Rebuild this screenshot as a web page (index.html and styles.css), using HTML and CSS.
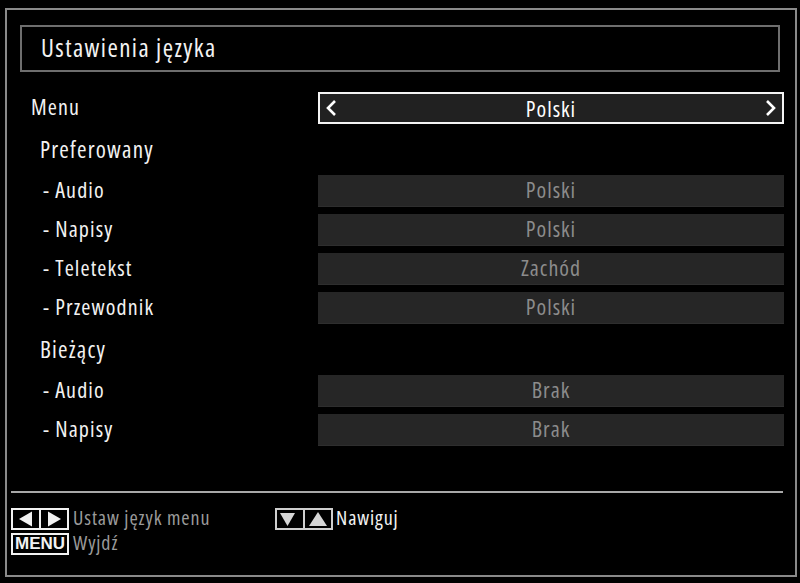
FILE: index.html
```html
<!DOCTYPE html>
<html lang="pl">

<head>
  <meta charset="UTF-8">
  <meta name="viewport" content="width=device-width, initial-scale=1.0">
  <title>Ustawienia języka</title>
  <link rel="stylesheet" href="styles.css">
</head>

<body>
  <div class="screen">
    <!-- naglowek -->
    <div class="title">Ustawienia języka</div>

    <!-- lista ustawien -->
    <div class="list">
      <div class="row">
        <span class="label">Menu</span>
        <div class="value selected">
          <svg class="chev" width="12" height="18" viewBox="0 0 12 18"><polyline points="10,2 3,9 10,16" /></svg>
          <span>Polski</span>
          <svg class="chev" width="12" height="18" viewBox="0 0 12 18"><polyline points="2,2 9,9 2,16" /></svg>
        </div>
      </div>

      <div class="heading">Preferowany</div>
      <div class="row">
        <span class="label sub">- Audio</span>
        <div class="value">Polski</div>
      </div>
      <div class="row">
        <span class="label sub">- Napisy</span>
        <div class="value">Polski</div>
      </div>
      <div class="row">
        <span class="label sub">- Teletekst</span>
        <div class="value">Zachód</div>
      </div>
      <div class="row">
        <span class="label sub">- Przewodnik</span>
        <div class="value">Polski</div>
      </div>

      <div class="heading">Bieżący</div>
      <div class="row">
        <span class="label sub">- Audio</span>
        <div class="value">Brak</div>
      </div>
      <div class="row">
        <span class="label sub">- Napisy</span>
        <div class="value">Brak</div>
      </div>
    </div>

    <!-- pomoc klawiszy -->
    <div class="footer">
      <div class="hint">
        <div class="keys">
          <svg width="26" height="18" viewBox="0 0 26 18"><polygon points="19,1.5 19,16.5 6,9" /></svg>
          <svg width="26" height="18" viewBox="0 0 26 18"><polygon points="7,1.5 7,16.5 20,9" /></svg>
        </div>
        <span class="hint-text">Ustaw język menu</span>
      </div>
      <div class="hint">
        <div class="keys light">
          <svg width="26" height="18" viewBox="0 0 26 18"><polygon points="3,3 18,3 10.5,16" /></svg>
          <svg width="26" height="18" viewBox="0 0 26 18"><polygon points="4,16 22,16 13,2" /></svg>
        </div>
        <span class="hint-text white">Nawiguj</span>
      </div>
      <div class="hint">
        <div class="menu-key">MENU</div>
        <span class="hint-text">Wyjdź</span>
      </div>
    </div>
  </div>
</body>

</html>
```

FILE: styles.css
```css
body {
  margin: 0;
  padding: 0;
  background-color: #000;
  font-family: "Open Sans", "DejaVu Sans Condensed", sans-serif;
  font-stretch: 75%;
  color: #f2f2f2;
}

.screen {
  display: flex;
  flex-direction: column;
  height: 569px;
  margin: 8px 3px 0 5px;
  border: 2px solid #8a8a8a;
  box-sizing: border-box;
}

.title {
  width: 760px;
  height: 47px;
  margin: 15px 0 0 13px;
  padding-left: 19px;
  border: 2px solid #6e6e6e;
  box-sizing: border-box;
  font-size: 25px;
  letter-spacing: 1.4px;
  line-height: 41px;
}

.list {
  margin-top: 20px;
  padding-left: 24px;
}

.row {
  display: flex;
  align-items: center;
  height: 32px;
  margin-bottom: 7px;
}

.label {
  flex: none;
  width: 287px;
  padding-bottom: 4px;
  box-sizing: border-box;
  font-size: 22px;
  letter-spacing: 1.1px;
}

.label.sub {
  padding-left: 12px;
}

.heading {
  height: 43px;
  padding-left: 9px;
  font-size: 23px;
  letter-spacing: 1.2px;
  line-height: 41px;
  box-sizing: border-box;
}

.row + .heading {
  height: 44px;
  line-height: 37px;
}

.value {
  display: flex;
  flex: none;
  align-items: center;
  justify-content: center;
  width: 466px;
  height: 32px;
  padding-bottom: 3px;
  background-color: #262626;
  border-bottom: 1px solid #2e2e2e;
  box-sizing: border-box;
  color: #8c8c8c;
  font-size: 22px;
  letter-spacing: 1px;
}

.value.selected {
  justify-content: space-between;
  padding: 0 5px 1px;
  border: 2px solid #f4f4f4;
  background-color: #212121;
  color: #fff;
}

.chev polyline {
  fill: none;
  stroke: #fff;
  stroke-width: 2.6;
}

.footer {
  display: grid;
  grid-template-columns: 264px auto;
  row-gap: 3px;
  margin: auto 12px 0 4px;
  padding: 15px 0 20px;
  border-top: 2px solid #a8a8a8;
}

.hint {
  display: flex;
  align-items: center;
  height: 22px;
}

.keys {
  display: flex;
  height: 22px;
  border: 2px solid #f2f2f2;
  box-sizing: border-box;
}

.keys svg {
  display: block;
}

.keys svg + svg {
  border-left: 2px solid #f2f2f2;
}

.keys polygon {
  fill: #f2f2f2;
}

.keys.light,
.keys.light svg + svg {
  border-color: #cfcfcf;
}

.keys.light polygon {
  fill: #d6d6d6;
}

.menu-key {
  width: 58px;
  height: 22px;
  border: 2px solid #f2f2f2;
  box-sizing: border-box;
  font-family: "Liberation Sans", sans-serif;
  font-stretch: normal;
  font-weight: bold;
  font-size: 17px;
  line-height: 18px;
  text-align: center;
}

.hint-text {
  margin-left: 4px;
  padding-bottom: 3px;
  font-size: 20px;
  letter-spacing: 0.9px;
  color: #9a9a9a;
}

.hint-text.white {
  color: #f2f2f2;
  margin-left: 3px;
}
```
